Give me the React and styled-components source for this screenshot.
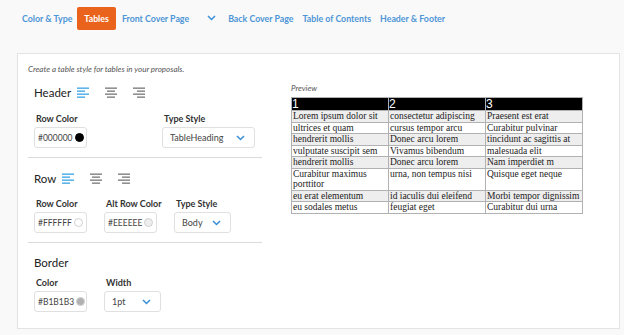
import React from 'react';
import styled, { createGlobalStyle } from 'styled-components';

const GlobalStyle = createGlobalStyle`
  html, body {
    margin: 0;
    padding: 0;
    background: #f9f9f9;
    font-family: 'Lato', 'Open Sans', sans-serif;
  }
`;

const Page = styled.div`
  width: 624px;
  height: 335px;
  background: #f9f9f9;
  overflow: hidden;
`;

const Nav = styled.div`
  display: flex;
  align-items: center;
  height: 36px;
  padding-left: 22px;
`;

const Tab = styled.div`
  font-size: 8.8px;
  font-weight: 700;
  color: ${(p) => (p.active ? '#fff' : '#4d95d6')};
  background: ${(p) => (p.active ? '#e9631c' : 'transparent')};
  border-radius: 2px;
  height: 23px;
  box-sizing: border-box;
  padding: ${(p) => (p.active ? '0 7px' : '0')};
  margin-right: ${(p) => p.gap || 9}px;
  display: flex;
  align-items: center;
`;

const Card = styled.div`
  margin: 17px 4px 0 17px;
  height: 276px;
  background: #fff;
  border: 1px solid #e3e3e3;
  box-sizing: border-box;
  padding: 10px 10px 0 10px;
`;

const Intro = styled.div`
  font-size: 8px;
  font-style: italic;
  color: #555;
`;

const Body = styled.div`
  display: flex;
  gap: 29px;
`;

const Left = styled.div`
  width: 234px;
`;

const Section = styled.div`
  padding: ${(p) => p.pad || '10px 0 9px 6px'};
  border-bottom: ${(p) => (p.last ? 'none' : '1px solid #dadada')};
`;

const HeadRow = styled.div`
  display: flex;
  align-items: center;
  gap: 16px;
  height: 16px;
`;

const Heading = styled.div`
  font-size: 11.5px;
  color: #222;
  margin-right: ${(p) => p.mr || 0}px;
`;

const Fields = styled.div`
  display: flex;
  gap: ${(p) => p.gap || 17}px;
  margin-top: ${(p) => p.mt || 9}px;
`;

const Field = styled.div`
  display: flex;
  flex-direction: column;
  gap: 3px;
  width: ${(p) => p.w || 53}px;
  white-space: nowrap;
`;

const Label = styled.div`
  font-size: 9px;
  font-weight: 700;
  color: #333;
  padding-left: 2px;
`;

const ColorBox = styled.div`
  width: 53px;
  height: 21px;
  box-sizing: border-box;
  border: 1px solid #e0e0e0;
  border-radius: 3px;
  display: flex;
  align-items: center;
  padding-left: 3px;
  gap: 2px;
  font-size: 8.5px;
  color: #444;
`;

const Swatch = styled.span`
  width: 9px;
  height: 9px;
  border-radius: 50%;
  background: ${(p) => p.color};
  border: 1px solid ${(p) => (p.color === '#000000' ? '#000' : '#d0d0d0')};
  box-sizing: border-box;
`;

const Select = styled.div`
  width: ${(p) => p.w}px;
  height: 21px;
  box-sizing: border-box;
  border: 1px solid #e0e0e0;
  border-radius: 3px;
  display: flex;
  align-items: center;
  justify-content: space-between;
  padding: 0 9px 0 7px;
  font-size: 9px;
  color: #444;
`;

const Right = styled.div`
  padding-top: 9px;
  width: 292px;
`;

const PreviewLabel = styled.div`
  font-size: 8px;
  font-style: italic;
  color: #555;
  margin-bottom: 4px;
`;

const Table = styled.table`
  width: 292px;
  border-collapse: collapse;
  table-layout: fixed;
  font-family: 'Liberation Serif', serif;
  font-size: 9.5px;
  line-height: 10.5px;
  color: #222;
`;

const Th = styled.th`
  background: #000;
  color: #fff;
  font-family: 'Liberation Sans', sans-serif;
  font-weight: 400;
  font-size: 12px;
  line-height: 12px;
  text-align: left;
  padding: 0;
  border: 1px solid #b1b1b3;
`;

const Td = styled.td`
  background: ${(p) => (p.alt ? '#eeeeee' : '#ffffff')};
  border: 1px solid #b1b1b3;
  padding: 0 1px;
  vertical-align: top;
`;

const Chevron = ({ color = '#3a8fd6' }) => (
  <svg width="9" height="6" viewBox="0 0 9 6">
    <path d="M1 1l3.5 3.5L8 1" fill="none" stroke={color} strokeWidth="1.5" />
  </svg>
);

const AlignIcon = ({ kind, active }) => {
  const color = active ? '#3aa3e3' : '#777';
  const widths = [12, 8, 12, 8];
  return (
    <svg width="12" height="11" viewBox="0 0 12 11">
      {widths.map((w, i) => {
        let x = 0;
        if (kind === 'center') x = (12 - w) / 2;
        if (kind === 'right') x = 12 - w;
        return <rect key={i} x={x} y={i * 3 + 0.5} width={w} height="1.3" fill={color} />;
      })}
    </svg>
  );
};

const rows = [
  ['Lorem ipsum dolor sit', 'consectetur adipiscing', 'Praesent est erat'],
  ['ultrices et quam', 'cursus tempor arcu', 'Curabitur pulvinar'],
  ['hendrerit mollis', 'Donec arcu lorem', 'tincidunt ac sagittis at'],
  ['vulputate suscipit sem', 'Vivamus bibendum', 'malesuada elit'],
  ['hendrerit mollis', 'Donec arcu lorem', 'Nam imperdiet m'],
  ['Curabitur maximus porttitor', 'urna, non tempus nisi', 'Quisque eget neque'],
  ['eu erat elementum', 'id iaculis dui eleifend', 'Morbi tempor dignissim'],
  ['eu sodales metus', 'feugiat eget', 'Curabitur dui urna'],
];

const ColorInput = ({ value }) => (
  <ColorBox>
    {value}
    <Swatch color={value} />
  </ColorBox>
);

const App = () => {
  return (
    <Page>
      <GlobalStyle />
      <Nav>
        <Tab gap={5}>Color &amp; Type</Tab>
        <Tab active gap={6}>Tables</Tab>
        <Tab gap={18}>Front Cover Page</Tab>
        <Tab gap={12}><Chevron /></Tab>
        <Tab>Back Cover Page</Tab>
        <Tab>Table of Contents</Tab>
        <Tab>Header &amp; Footer</Tab>
      </Nav>
      <Card>
        <Intro>Create a table style for tables in your proposals.</Intro>
        <Body>
          <Left>
            <Section pad="10px 0 9px 6px">
              <HeadRow>
                <Heading mr={-10}>Header</Heading>
                <AlignIcon kind="left" active />
                <AlignIcon kind="center" />
                <AlignIcon kind="right" />
              </HeadRow>
              <Fields gap={75} mt={13}>
                <Field>
                  <Label>Row Color</Label>
                  <ColorInput value="#000000" />
                </Field>
                <Field w={93}>
                  <Label>Type Style</Label>
                  <Select w={93}>
                    TableHeading
                    <Chevron />
                  </Select>
                </Field>
              </Fields>
            </Section>
            <Section pad="12px 0 9px 6px">
              <HeadRow>
                <Heading mr={-10}>Row</Heading>
                <AlignIcon kind="left" active />
                <AlignIcon kind="center" />
                <AlignIcon kind="right" />
              </HeadRow>
              <Fields mt={12}>
                <Field>
                  <Label>Row Color</Label>
                  <ColorInput value="#FFFFFF" />
                </Field>
                <Field>
                  <Label>Alt Row Color</Label>
                  <ColorInput value="#EEEEEE" />
                </Field>
                <Field w={57}>
                  <Label>Type Style</Label>
                  <Select w={57}>
                    Body
                    <Chevron />
                  </Select>
                </Field>
              </Fields>
            </Section>
            <Section pad="11px 0 0 6px" last>
              <HeadRow>
                <Heading>Border</Heading>
              </HeadRow>
              <Fields mt={7}>
                <Field>
                  <Label>Color</Label>
                  <ColorInput value="#B1B1B3" />
                </Field>
                <Field w={57}>
                  <Label>Width</Label>
                  <Select w={57}>
                    1pt
                    <Chevron />
                  </Select>
                </Field>
              </Fields>
            </Section>
          </Left>
          <Right>
            <PreviewLabel>Preview</PreviewLabel>
            <Table>
              <thead>
                <tr>
                  <Th>1</Th>
                  <Th>2</Th>
                  <Th>3</Th>
                </tr>
              </thead>
              <tbody>
                {rows.map((r, i) => (
                  <tr key={i}>
                    {r.map((c, j) => (
                      <Td key={j} alt={i % 2 === 0}>{c}</Td>
                    ))}
                  </tr>
                ))}
              </tbody>
            </Table>
          </Right>
        </Body>
      </Card>
    </Page>
  );
};

export default App;
